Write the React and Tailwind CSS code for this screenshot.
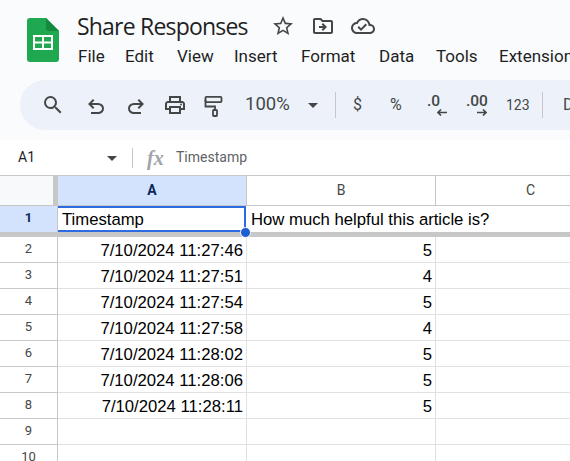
import { MdSearch, MdOutlinePrint, MdStarBorder, MdOutlineDriveFileMove, MdOutlineCloudDone, MdArrowDropDown } from 'react-icons/md';

const menus = [
  ['File', 'w-[47px]'],
  ['Edit', 'w-[52px]'],
  ['View', 'w-[57px]'],
  ['Insert', 'w-[67px]'],
  ['Format', 'w-[78px]'],
  ['Data', 'w-[57px]'],
  ['Tools', 'w-[63px]'],
  ['Extensions', 'w-[90px]'],
];

const rows = [
  [2, '7/10/2024 11:27:46', '5'],
  [3, '7/10/2024 11:27:51', '4'],
  [4, '7/10/2024 11:27:54', '5'],
  [5, '7/10/2024 11:27:58', '4'],
  [6, '7/10/2024 11:28:02', '5'],
  [7, '7/10/2024 11:28:06', '5'],
  [8, '7/10/2024 11:28:11', '5'],
  [9, '', ''],
  [10, '', ''],
];

function SheetsLogo() {
  return (
    <svg width="32" height="44" viewBox="0 0 32 44">
      <path d="M3 0h16l13 13v28a3 3 0 0 1-3 3H3a3 3 0 0 1-3-3V3a3 3 0 0 1 3-3z" fill="#1fa84f" />
      <path d="M19 0l13 13h-10a3 3 0 0 1-3-3z" fill="#138a3e" />
      <path d="M6 17h20v15H6z" fill="#fff" />
      <path d="M8 19h7v4.500H8zM17 19h7v4.500h-7zM8 25.500h7V30H8zM17 25.500h7V30h-7z" fill="#1fa84f" />
    </svg>
  );
}

function UndoIcon({ flip, className }) {
  return (
    <svg width="24" height="24" viewBox="0 0 24 24" fill="currentColor" className={`${flip ? '-scale-x-100' : ''} ${className}`}>
      <path d="M7 19v-2h7.100q1.575 0 2.737-1 1.163-1 1.163-2.500T16.838 11q-1.163-1-2.738-1H7.800l2.600 2.600L9 14 4 9l5-5 1.400 1.400L7.800 8h6.300q2.425 0 4.163 1.575Q20 11.150 20 13.500t-1.737 3.925Q16.525 19 14.100 19Z" />
    </svg>
  );
}

function PaintIcon({ className }) {
  return (
    <svg width="24" height="24" viewBox="0 0 24 24" fill="none" stroke="currentColor" strokeWidth="1.800" className={className}>
      <rect x="4.500" y="2.900" width="16" height="5.200" rx="1" />
      <path d="M4.500 5.500V12.500H14V16" />
      <rect x="12" y="16" width="4" height="6" rx="0.800" />
    </svg>
  );
}

function Arrow({ right, className }) {
  return (
    <svg width="10" height="7" viewBox="0 0 10 7" fill="none" stroke="currentColor" strokeWidth="1.600" className={`${right ? '-scale-x-100' : ''} ${className}`}>
      <path d="M4 .5 1 3.500 4 6.500M1 3.500H10" />
    </svg>
  );
}

export default function App() {
  return (
    <div className="w-[570px] h-[461px] overflow-hidden bg-white font-['Roboto',sans-serif]">
      {/* top bar */}
      <div className="h-[140px] bg-[#f9fbfd] overflow-hidden">
        <div className="flex h-[80px]">
          <div className="w-[77px] shrink-0 pl-[27px] pt-[18px]">
            <SheetsLogo />
          </div>
          <div className="flex flex-col">
            <div className="flex items-center h-[30px] mt-[11px]">
              <span className="w-[194px] text-[23px] text-[#1f1f1f] whitespace-nowrap font-['Open_Sans',sans-serif] tracking-[-0.8px]">Share Responses</span>
              <div className="flex items-center gap-[16px] text-[#444746]">
                <MdStarBorder size={24} />
                <MdOutlineDriveFileMove size={24} />
                <MdOutlineCloudDone size={24} />
              </div>
            </div>
            <div className="flex h-[26px] mt-[3px] ml-px items-center text-[17px] text-[#1f1f1f] whitespace-nowrap">
              {menus.map(([m, w]) => (
                <span key={m} className={`${w} shrink-0`}>{m}</span>
              ))}
            </div>
          </div>
        </div>
        <div className="ml-[20px] h-[50px] rounded-l-full bg-[#edf2fa] flex items-center text-[#444746] whitespace-nowrap">
          <MdSearch size={24} className="ml-[21px] shrink-0" />
          <UndoIcon className="ml-[19px] mt-[4px] shrink-0" />
          <UndoIcon flip className="ml-[16px] mt-[4px] shrink-0" />
          <MdOutlinePrint size={24} className="ml-[15px] shrink-0" />
          <PaintIcon className="ml-[14px] mt-[1px] shrink-0" />
          <span className="ml-[20px] w-[46px] shrink-0 text-[18.500px]">100%</span>
          <MdArrowDropDown size={24} className="ml-[10px] shrink-0" />
          <div className="ml-[10px] w-px h-[26px] bg-[#c7c7c7] shrink-0" />
          <span className="ml-[17px] w-[10px] shrink-0 text-[16px]">$</span>
          <span className="ml-[27px] w-[16px] shrink-0 text-[16px]">%</span>
          <span className="ml-[21px] w-[24px] shrink-0 relative block pb-[6px] text-[15.500px] leading-none font-medium">
            .0
            <Arrow className="absolute left-[10px] top-[15px]" />
          </span>
          <span className="ml-[15px] w-[24px] shrink-0 relative block pb-[6px] text-[15.500px] leading-none font-medium">
            .00
            <Arrow right className="absolute left-[11px] top-[15px]" />
          </span>
          <span className="ml-[16px] w-[23px] shrink-0 text-[14px]">123</span>
          <div className="ml-[13px] w-px h-[26px] bg-[#c7c7c7] shrink-0" />
          <span className="ml-[20px] text-[16px]">D</span>
        </div>
      </div>

      {/* formula bar */}
      <div className="h-[36px] flex items-center border-b border-[#c7c7c7] text-[14px] text-[#5f6368]">
        <span className="ml-[18px] w-[82px] text-[#1f1f1f]">A1</span>
        <MdArrowDropDown size={24} className="text-[#444746]" />
        <div className="ml-[8px] w-px h-[20px] bg-[#c7c7c7]" />
        <span className="ml-[14px] w-[29px] text-[20px] font-bold italic font-['Liberation_Serif',serif] text-[#a0a4a8]">fx</span>
        <span>Timestamp</span>
      </div>

      {/* column headers */}
      <div className="flex h-[30px] border-b border-[#c7c7c7] text-[14px] text-[#444746]">
        <div className="w-[53px] bg-[#f8f9fa] shrink-0" />
        <div className="w-[5px] bg-[#c7c7c7] shrink-0" />
        <div className="w-[189px] shrink-0 bg-[#d3e3fd] border-r border-[#c7c7c7] flex items-center justify-center font-bold text-[#0b2a5a]">A</div>
        <div className="w-[189px] shrink-0 border-r border-[#c7c7c7] flex items-center justify-center">B</div>
        <div className="w-[189px] shrink-0 flex items-center justify-center">C</div>
      </div>

      {/* frozen row */}
      <div className="flex h-[26px] font-['Liberation_Sans',sans-serif] text-[16.700px] text-black">
        <div className="w-[58px] shrink-0 bg-[#d3e3fd] border-r border-[#c7c7c7] flex items-center justify-center pb-[2px] font-bold text-[13px] text-[#0b2a5a] font-['Roboto',sans-serif]">1</div>
        <div className="relative w-[188px] shrink-0 flex items-center pl-[4px] pt-[2px] border-y-2 border-r-2 border-[#2d6ce0] bg-white">
          Timestamp
          <div className="absolute -right-[7px] -bottom-[8px] w-[11px] h-[11px] rounded-full bg-[#1f5ed1] border border-white z-10" />
        </div>
        <div className="flex-1 flex items-center pl-[5px] pt-[2px] whitespace-nowrap">How much helpful this article is?</div>
      </div>
      <div className="h-[5px] bg-[#c7c7c7]" />

      {/* data rows */}
      {rows.map(([n, time, val]) => (
        <div key={n} className="flex h-[26px] font-['Liberation_Sans',sans-serif] text-[16.700px] text-black">
          <div className="w-[58px] shrink-0 border-r border-b border-[#c7c7c7] flex items-center justify-center pb-[2px] text-[13px] text-[#444746] font-['Roboto',sans-serif]">{n}</div>
          <div className="w-[189px] shrink-0 border-r border-b border-[#e1e1e1] flex items-center justify-end pr-[3px] pt-[2px]">{time}</div>
          <div className="w-[189px] shrink-0 border-r border-b border-[#e1e1e1] flex items-center justify-end pr-[3px] pt-[2px]">{val}</div>
          <div className="flex-1 border-b border-[#e1e1e1]" />
        </div>
      ))}
    </div>
  );
}
